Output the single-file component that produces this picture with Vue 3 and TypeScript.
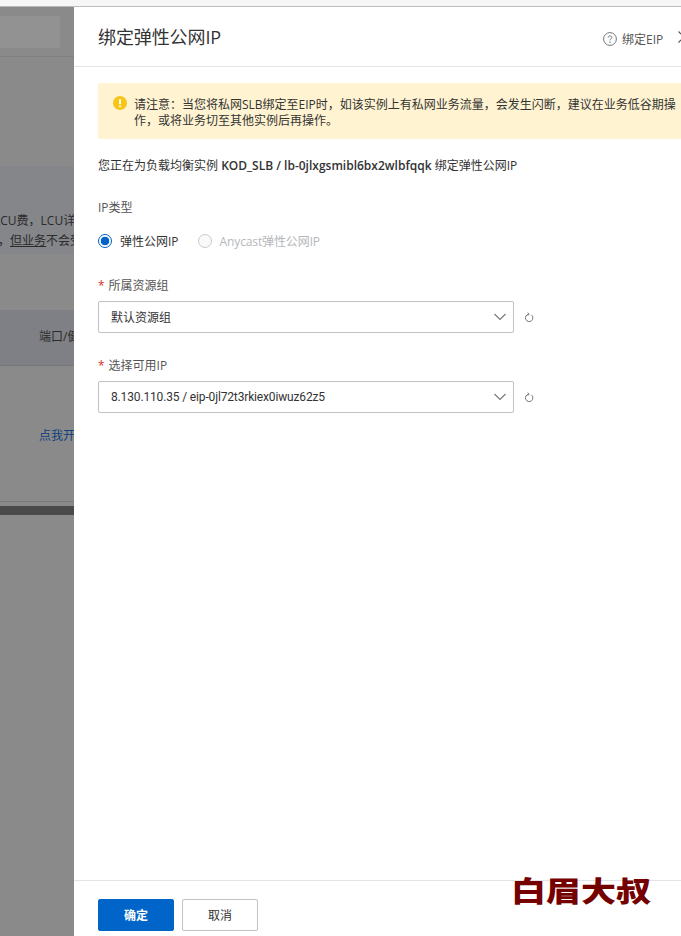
<script setup lang="ts">
const tabs: string[] = ['弹性公网IP', 'Anycast弹性公网IP']
</script>

<template>
  <div class="page">
    <div class="backdrop">
      <div class="strip"></div>
      <div class="bg-head"><div class="bg-search"></div></div>
      <div class="bg-notice">
        <p class="l1">LCU费，LCU详细</p>
        <p>，<u>但业务</u>不会受影响</p>
      </div>
      <div class="bg-thead">端口/健康检查</div>
      <div class="bg-row"><span>点我开通</span></div>
      <div class="bg-end"></div>
      <div class="bg-scroll"></div>
    </div>

    <aside class="drawer">
      <header class="d-head">
        <h1>绑定弹性公网IP</h1>
        <div class="d-tools">
          <a class="help">
            <svg width="14" height="14" viewBox="0 0 14 14" fill="none" stroke="#73777a">
              <circle cx="7" cy="7" r="6.4" />
              <path d="M5.2 5.6C5.2 4.5 6 3.9 7 3.9s1.8.6 1.8 1.6c0 1.3-1.8 1.3-1.8 2.8" />
              <circle cx="7" cy="10.1" r=".35" />
            </svg>
            绑定EIP
          </a>
          <svg class="close" width="14" height="14" viewBox="0 0 14 14" fill="none" stroke="#555" stroke-width="1.1">
            <path d="M1.5 1.5l11 11M12.5 1.5l-11 11" />
          </svg>
        </div>
      </header>

      <main class="d-body">
        <div class="alert">
          <svg class="alert-icon" width="14" height="14" viewBox="0 0 14 14">
            <circle cx="7" cy="7" r="7" fill="#f5c518" />
            <rect x="6.1" y="3" width="1.8" height="5.2" rx=".6" fill="#fff" />
            <circle cx="7" cy="10.2" r="1" fill="#fff" />
          </svg>
          <p>请注意：当您将私网SLB绑定至EIP时，如该实例上有私网业务流量，会发生闪断，建议在业务低谷期操作，或将业务切至其他实例后再操作。</p>
        </div>

        <p class="intro">您正在为负载均衡实例 <b>KOD_SLB / lb-0jlxgsmibl6bx2wlbfqqk</b> 绑定弹性公网IP</p>

        <div class="label first">IP类型</div>
        <div class="radios">
          <label class="radio on"><i></i>{{ tabs[0] }}</label>
          <label class="radio off"><i></i>{{ tabs[1] }}</label>
        </div>

        <div class="label req"><em>*</em>所属资源组</div>
        <div class="field">
          <div class="select">
            <span>默认资源组</span>
            <svg width="14" height="8" viewBox="0 0 14 8" fill="none" stroke="#73777a" stroke-width="1.1"><path d="M1.5 1l5.5 5.5L12.5 1" /></svg>
          </div>
          <svg class="refresh" width="10" height="11" viewBox="0 0 10 11" fill="none" stroke="#73777a">
            <path d="M7.4 2.9A3.7 3.7 0 1 1 4.6 2.2" />
            <path d="M3.6.6l1.7 1.5-1.7 1.5" stroke-width=".9" />
          </svg>
        </div>

        <div class="label req gap2"><em>*</em>选择可用IP</div>
        <div class="field">
          <div class="select">
            <span class="ip">8.130.110.35 / eip-0jl72t3rkiex0iwuz62z5</span>
            <svg width="14" height="8" viewBox="0 0 14 8" fill="none" stroke="#73777a" stroke-width="1.1"><path d="M1.5 1l5.5 5.5L12.5 1" /></svg>
          </div>
          <svg class="refresh" width="10" height="11" viewBox="0 0 10 11" fill="none" stroke="#73777a">
            <path d="M7.4 2.9A3.7 3.7 0 1 1 4.6 2.2" />
            <path d="M3.6.6l1.7 1.5-1.7 1.5" stroke-width=".9" />
          </svg>
        </div>
      </main>

      <footer class="d-foot">
        <button class="btn primary">确定</button>
        <button class="btn">取消</button>
        <div class="mark">白眉大叔</div>
      </footer>
    </aside>
  </div>
</template>

<style>
html, body { margin: 0; padding: 0; background: #fff; }
</style>

<style scoped>
.page {
  position: relative;
  width: 681px;
  height: 936px;
  overflow: hidden;
  font-family: "Open Sans", "Noto Sans CJK SC", sans-serif;
  font-size: 12px;
  color: #333;
}
.backdrop {
  height: 936px;
  background: #8a8a8a;
  display: flex;
  flex-direction: column;
  color: #2b2b2b;
}
.strip { height: 6px; background: #f6f6f6; border-bottom: 1px solid #bbb; flex: none; }
.bg-head {
  height: 50px;
  box-sizing: border-box;
  padding-top: 9px;
  border-bottom: 1px solid #808080;
  flex: none;
}
.bg-search { width: 60px; height: 32px; background: #929292; }
.bg-notice {
  margin-top: 109px;
  height: 88px;
  box-sizing: border-box;
  padding-top: 45px;
  background: #85868a;
  flex: none;
  white-space: nowrap;
}
.bg-notice p { margin: 0 0 0 -2px; line-height: 20px; }
.bg-notice .l1 { margin-left: -6px; }
.bg-thead {
  margin-top: 56px;
  height: 56px;
  line-height: 54px;
  padding-left: 39px;
  background: #7f8085;
  border-bottom: 1px solid #777;
  box-sizing: border-box;
  white-space: nowrap;
  flex: none;
}
.bg-row {
  height: 136px;
  padding: 60px 0 0 39px;
  box-sizing: border-box;
  color: #0f3f7d;
  border-bottom: 1px solid #7a7a7a;
  white-space: nowrap;
  flex: none;
}
.bg-end { height: 4px; flex: none; }
.bg-scroll { height: 9px; background: #4a4a4a; flex: none; }

.drawer {
  position: absolute;
  left: 74px;
  top: 7px;
  bottom: 0;
  width: 607px;
  background: #fff;
  display: flex;
  flex-direction: column;
  overflow: hidden;
}
.d-head {
  height: 60px;
  box-sizing: border-box;
  border-bottom: 1px solid #e3e4e6;
  padding-left: 24px;
  display: flex;
  align-items: center;
  justify-content: space-between;
  flex: none;
}
h1 {
  margin: 0 0 2px;
  font-size: 18px;
  font-weight: 400;
  color: #333;
  letter-spacing: -0.1px;
}
.d-tools { display: flex; align-items: center; width: 78px; gap: 14px; flex: none; margin-top: 4px; white-space: nowrap; }
.help { display: flex; align-items: center; gap: 5px; color: #555; flex: none; }
.close { flex: none; margin-top: -3px; }

.d-body { flex: 1; padding: 16px 0 0 24px; }
.alert {
  display: flex;
  box-sizing: border-box;
  width: 583px;
  height: 56px;
  background: #fff3d1;
  padding: 14px 0 0 15px;
  border-radius: 2px 0 0 2px;
}
.alert-icon { flex: none; margin: -1px 7px 0 0; }
.alert p { margin: 0; line-height: 16px; width: 545px; flex: none; color: #333; }
.intro { margin: 18px 0 0; line-height: 18px; color: #333; white-space: nowrap; }
.intro b { font-weight: 600; }
.label { line-height: 18px; color: #555; }
.first { margin-top: 24px; }
.req { margin-top: 27px; }
.gap2 { margin-top: 24px; }
.req em { color: #d93026; font-style: normal; margin-right: 4px; }
.radios { display: flex; gap: 19px; margin-top: 15px; height: 18px; }
.radio { display: flex; align-items: center; gap: 8px; color: #333; }
.radio i {
  width: 14px;
  height: 14px;
  box-sizing: border-box;
  border-radius: 50%;
  border: 1px solid #c8cacd;
  background: #fff;
  display: block;
  flex: none;
}
.radio.on i { border-color: #0064c8; background: radial-gradient(circle, #0064c8 4px, #fff 4.6px); }
.radio.off { color: #b5b7ba; letter-spacing: -0.12px; }
.radio.off i { background: #fafafa; }
.field { display: flex; align-items: center; gap: 10px; margin-top: 6px; }
.select {
  width: 416px;
  height: 32px;
  box-sizing: border-box;
  border: 1px solid #c0c2c6;
  border-radius: 2px;
  padding: 0 6px 0 12px;
  display: flex;
  align-items: center;
  justify-content: space-between;
  color: #333;
}
.ip { font-family: Roboto, "Noto Sans CJK SC", sans-serif; letter-spacing: -0.15px; }
.refresh { flex: none; }
.d-foot {
  position: relative;
  height: 56px;
  box-sizing: border-box;
  flex: none;
  border-top: 1px solid #e3e4e6;
  padding: 18px 0 0 24px;
  display: flex;
  gap: 8px;
  align-items: flex-start;
}
.btn {
  width: 76px;
  height: 32px;
  box-sizing: border-box;
  border: 1px solid #c0c2c6;
  border-radius: 2px;
  background: #fff;
  font: inherit;
  color: #333;
  padding: 0;
}
.primary { background: #0064c8; border-color: #0064c8; color: #fff; font-weight: 600; }
.mark {
  position: absolute;
  left: 437px;
  top: -9px;
  font-family: "Noto Sans CJK SC", sans-serif;
  font-size: 35px;
  line-height: 44px;
  font-weight: 900;
  color: #750000;
  white-space: nowrap;
  transform: scaleY(.8);
  transform-origin: 0 0;
}
</style>
